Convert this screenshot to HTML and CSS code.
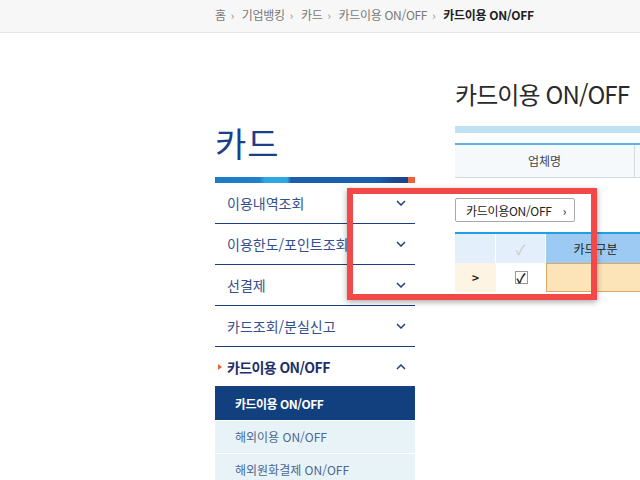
FILE: index.html
```html
<!DOCTYPE html>
<html lang="ko">
<head>
    <meta charset="UTF-8">
    <title>카드이용 ON/OFF</title>
    <link rel="stylesheet" href="styles.css">
</head>
<body>
    <div class="topbar">
        <div class="crumbs">
            <span>홈</span><span class="sep">›</span>
            <span>기업뱅킹</span><span class="sep">›</span>
            <span>카드</span><span class="sep">›</span>
            <span>카드이용 ON/OFF</span><span class="sep">›</span>
            <span class="current">카드이용 ON/OFF</span>
        </div>
    </div>

    <div class="page">
        <aside class="side">
            <h2 class="side-title">카드</h2>
            <div class="side-bar"><span class="side-dot"></span></div>
            <ul class="menu">
                <li class="menu-item">이용내역조회 <svg class="chev" width="10" height="6" viewBox="0 0 10 6"><polyline points="1,1 5,5 9,1" fill="none" stroke="#1f3f80" stroke-width="1.5"/></svg></li>
                <li class="menu-item">이용한도/포인트조회 <svg class="chev" width="10" height="6" viewBox="0 0 10 6"><polyline points="1,1 5,5 9,1" fill="none" stroke="#1f3f80" stroke-width="1.5"/></svg></li>
                <li class="menu-item">선결제 <svg class="chev" width="10" height="6" viewBox="0 0 10 6"><polyline points="1,1 5,5 9,1" fill="none" stroke="#1f3f80" stroke-width="1.5"/></svg></li>
                <li class="menu-item">카드조회/분실신고 <svg class="chev" width="10" height="6" viewBox="0 0 10 6"><polyline points="1,1 5,5 9,1" fill="none" stroke="#1f3f80" stroke-width="1.5"/></svg></li>
                <li class="menu-item open"><span class="mark"></span>카드이용 ON/OFF <svg class="chev" width="10" height="6" viewBox="0 0 10 6"><polyline points="1,5 5,1 9,5" fill="none" stroke="#1f3f80" stroke-width="1.5"/></svg></li>
            </ul>
            <ul class="submenu">
                <li class="sub-item active">카드이용 ON/OFF</li>
                <li class="sub-item">해외이용 ON/OFF</li>
                <li class="sub-item">해외원화결제 ON/OFF</li>
            </ul>
        </aside>

        <main class="content">
            <h1 class="title">카드이용 ON/OFF</h1>
            <div class="info-bar"></div>
            <div class="table-head">
                <div class="th wide">업체명</div>
                <div class="th"></div>
            </div>

            <button class="tab-btn">카드이용ON/OFF <span class="arr">›</span></button>

            <div class="grid">
                <div class="g-row g-head">
                    <div class="cell c1"></div>
                    <div class="cell c2 faint">✓</div>
                    <div class="cell c3">카드구분</div>
                </div>
                <div class="g-row g-body">
                    <div class="cell c1"><b>&gt;</b></div>
                    <div class="cell c2"><span class="check">✓</span></div>
                    <div class="cell c3"></div>
                </div>
            </div>
        </main>
    </div>

    <div class="callout"></div>
</body>
</html>
```

FILE: styles.css
```css
body {
    margin: 0;
    font-family: "Noto Sans CJK KR", "Noto Sans", sans-serif;
    background: #fff;
    color: #333;
    overflow: hidden;
}
.topbar {
    height: 32px;
    background: #f7f7f7;
    border-bottom: 1px solid #e6e6e6;
}
.crumbs {
    padding-left: 215px;
    font-size: 12px;
    line-height: 29px;
    color: #777;
    letter-spacing: -0.3px;
    white-space: nowrap;
}
.crumbs .sep {
    font-size: 11px;
    color: #888;
    margin: 0 5px;
}
.crumbs .current {
    color: #222;
    font-weight: bold;
}
.page {
    display: flex;
    gap: 40px;
    padding-left: 215px;
}
.side {
    width: 200px;
    flex: none;
}
.side-title {
    margin: 90px 0 14px;
    font-size: 34px;
    line-height: 40px;
    font-weight: normal;
    color: #1c3f8c;
    letter-spacing: 1px;
}
.side-bar {
    position: relative;
    height: 6px;
    background: linear-gradient(90deg, #1d7cc8 0%, #1e7fcb 22%, #2ea6e2 25%, #2ea6e2 36%, #1a5eae 38%, #1a5eae 82%, #1c4a96 88%, #1a3f8a 100%);
}
.side-dot {
    position: absolute;
    right: 0;
    top: 0;
    width: 7px;
    height: 6px;
    background: #f0603c;
}
.menu, .submenu {
    list-style: none;
    margin: 0;
    padding: 0;
}
.menu-item {
    position: relative;
    display: flex;
    align-items: center;
    justify-content: space-between;
    height: 40px;
    padding: 0 9px 0 12px;
    border-bottom: 1px solid #1c3f80;
    font-size: 14px;
    color: #34508e;
}
.menu-item.open {
    font-weight: bold;
    color: #1c2f6a;
    letter-spacing: -0.6px;
    border-bottom-width: 2px;
    height: 39px;
}
.mark {
    position: absolute;
    left: 3px;
    top: 17px;
    border-left: 4px solid #f0603c;
    border-top: 3px solid transparent;
    border-bottom: 3px solid transparent;
}
.sub-item {
    height: 32px;
    line-height: 32px;
    padding-left: 20px;
    font-size: 12px;
    color: #4a6694;
    background: #e8f3f8;
    border-bottom: 1px solid #fff;
}
.sub-item.active {
    background: #12407f;
    color: #fff;
    font-weight: bold;
    letter-spacing: -0.5px;
}
.content {
    flex: 1;
    min-width: 0;
}
.title {
    margin: 46px 0 17px;
    font-size: 24px;
    line-height: 30px;
    font-weight: normal;
    color: #2a2a2a;
    letter-spacing: -0.9px;
    white-space: nowrap;
}
.info-bar {
    height: 7px;
    background: #c0e2f5;
}
.table-head {
    display: flex;
    margin-top: 10px;
    border-top: 2px solid #5cb1e6;
    border-bottom: 1px solid #d3dbe3;
    background: #f5f9fc;
}
.th {
    height: 32px;
    line-height: 32px;
    font-size: 12px;
    color: #444;
    text-align: center;
    flex: 1;
}
.th.wide {
    flex: none;
    width: 179px;
    border-right: 1px solid #d3dbe3;
}
.tab-btn {
    display: block;
    margin-top: 20px;
    height: 24px;
    width: 120px;
    padding: 0 0 0 10px;
    text-align: left;
    border: 1px solid #a9a9a9;
    border-radius: 2px;
    background: #fff;
    font-family: inherit;
    font-size: 12px;
    color: #222;
    letter-spacing: -0.3px;
}
.tab-btn .arr {
    margin-left: 8px;
    font-size: 12px;
}
.grid {
    margin-top: 10px;
    border-top: 2px solid #1ea0e6;
}
.g-row {
    display: flex;
}
.cell {
    height: 29px;
    display: flex;
    align-items: center;
    justify-content: center;
    font-size: 12px;
    color: #222;
    box-sizing: border-box;
    flex: none;
}
.g-head .cell {
    background: #e3effb;
    border-right: 1px solid #fff;
}
.g-head .c3 {
    background: #9dcaf3;
}
.c1 {
    width: 41px;
}
.c2 {
    width: 50px;
}
.c3 {
    width: 100px;
}
.faint {
    color: #c8c8c8;
    font-size: 14px;
}
.g-body .c1 {
    background: #fdf4e4;
}
.g-body .c2 {
    background: #fff;
}
.g-body .c3 {
    background: #fde4b8;
    border: 1px solid #dcaa62;
}
.check {
    width: 11px;
    height: 11px;
    line-height: 11px;
    border: 1px solid #999;
    font-size: 13px;
    font-weight: bold;
    color: #222;
    text-align: center;
}
.callout {
    position: absolute;
    left: 347px;
    top: 188px;
    width: 238px;
    height: 100px;
    border: 6px solid #f24848;
    box-shadow: 0 2px 6px rgba(0, 0, 0, 0.35);
}
```
